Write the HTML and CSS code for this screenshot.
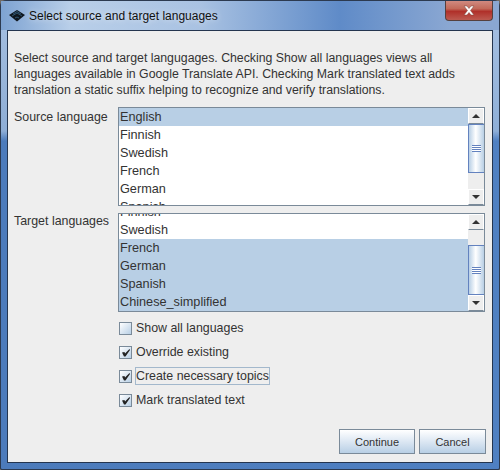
FILE: index.html
```html
<!doctype html>
<html lang="en">

<head>
  <meta charset="UTF-8">
  <title>Select source and target languages</title>
  <link rel="stylesheet" href="styles.css">
</head>

<body>
  <section class="window">
    <header class="titlebar">
      <svg class="appicon" width="18" height="14" viewBox="0 0 18 14">
        <path d="M1 6 L9 1 L17 6 L9 12.500 Z" fill="#0e161e"/>
        <path d="M5 5 L9 2.500 L13 5 M4 7 L9 4 L14 7 M7 9 L9 8 L11 9" fill="none" stroke="#2f5470" stroke-width="1"/>
      </svg>
      <span class="title">Select source and target languages</span>
      <div class="close">
        <svg width="16" height="11" viewBox="0 0 16 11">
          <path d="M3 1 H6 L8 3.500 L10 1 H13 L9.500 5.500 L13 10 H10 L8 7.500 L6 10 H3 L6.500 5.500 Z" fill="#fff" stroke="#7a4038" stroke-width="0.500"/>
        </svg>
      </div>
    </header>

    <main class="content">
      <p class="intro">Select source and target langugages. Checking Show all languages views all<br>languages available in Google Translate API. Checking Mark translated text adds<br>translation a static suffix helping to recognize and verify translations.</p>

      <div class="field source">
        <label class="field-label">Source language</label>
        <div class="listbox">
          <ul class="items">
            <li class="selected">English</li>
            <li>Finnish</li>
            <li>Swedish</li>
            <li>French</li>
            <li>German</li>
            <li>Spanish</li>
          </ul>
          <div class="scrollbar">
            <div class="arrow"><span class="tri up"></span></div>
            <div class="track track-source">
              <div class="thumb"><span class="grip"></span></div>
            </div>
            <div class="arrow"><span class="tri down"></span></div>
          </div>
        </div>
      </div>

      <div class="field target">
        <label class="field-label">Target languages</label>
        <div class="listbox">
          <ul class="items scrolled">
            <li>Finnish</li>
            <li>Swedish</li>
            <li class="selected">French</li>
            <li class="selected">German</li>
            <li class="selected">Spanish</li>
            <li class="selected">Chinese_simplified</li>
          </ul>
          <div class="scrollbar">
            <div class="arrow"><span class="tri up"></span></div>
            <div class="track track-target">
              <div class="thumb"><span class="grip"></span></div>
            </div>
            <div class="arrow"><span class="tri down"></span></div>
          </div>
        </div>
      </div>

      <div class="options">
        <div class="option"><span class="box"></span><span class="opt-text">Show all languages</span></div>
        <div class="option">
          <span class="box"><svg class="check" width="11" height="11" viewBox="0 0 11 11"><path d="M2 5.500 L4.500 5 L5 6.500 L9.500 2 L10 3 L5.500 9.500 L4 9.500 Z" fill="#222"/></svg></span>
          <span class="opt-text">Override existing</span>
        </div>
        <div class="option">
          <span class="box"><svg class="check" width="11" height="11" viewBox="0 0 11 11"><path d="M2 5.500 L4.500 5 L5 6.500 L9.500 2 L10 3 L5.500 9.500 L4 9.500 Z" fill="#222"/></svg></span>
          <span class="opt-text focused">Create necessary topics</span>
        </div>
        <div class="option">
          <span class="box"><svg class="check" width="11" height="11" viewBox="0 0 11 11"><path d="M2 5.500 L4.500 5 L5 6.500 L9.500 2 L10 3 L5.500 9.500 L4 9.500 Z" fill="#222"/></svg></span>
          <span class="opt-text">Mark translated text</span>
        </div>
      </div>

      <div class="buttons">
        <button class="btn continue">Continue</button>
        <button class="btn cancel">Cancel</button>
      </div>
    </main>
  </section>
</body>
</html>
```

FILE: styles.css
```css
html, body {
  margin: 0;
  padding: 0;
}

body {
  width: 500px;
  height: 470px;
  overflow: hidden;
  background: #6f6a66;
  font-family: "Liberation Sans", Arial, sans-serif;
  font-size: 12.300px;
  color: #333333;
}

.window {
  box-sizing: border-box;
  width: 500px;
  height: 470px;
  display: flex;
  flex-direction: column;
  padding: 0 6px 6px 6px;
  border: 1px solid #2c3a50;
  border-radius: 6px 6px 2px 2px;
  background:
    linear-gradient(180deg, rgba(190, 210, 235, 0.8) 0, rgba(170, 195, 225, 0.7) 130px, rgba(170, 195, 225, 0) 140px),
    linear-gradient(90deg, #4c7bbb 0, #4f80c2 100%);
}

.titlebar {
  height: 29px;
  flex: none;
  display: flex;
  align-items: center;
  margin: 0 -6px;
  padding: 0 6px 0 7px;
  background: linear-gradient(90deg, #7ea3d2 0, #b9cfe9 14%, #a9c2e2 40%, #5f8bc8 68%, #8aa7d2 90%);
}

.appicon {
  margin-right: 3px;
}

.title {
  flex: 1;
  font-size: 12px;
  color: #101010;
  text-shadow: 0 0 6px rgba(255, 255, 255, 0.7);
}

.close {
  width: 46px;
  height: 19px;
  margin: -10px 0 0 0;
  display: flex;
  align-items: center;
  justify-content: center;
  border: 1px solid #55403e;
  border-top: 0;
  border-radius: 0 0 4px 4px;
  background: linear-gradient(180deg, #d08a80 0, #c26a5a 40%, #b0302a 55%, #bc5a50 100%);
}

.content {
  flex: 1;
  box-sizing: border-box;
  display: flex;
  flex-direction: column;
  padding: 19px 6px 8px 6px;
  border: 1px solid #24354f;
  background: #eeeeee;
}

.intro {
  margin: 0 0 9px 0;
  line-height: 16px;
}

.field {
  display: flex;
  height: 99px;
}

.target {
  margin-top: 7px;
}

.field-label {
  width: 104px;
  flex: none;
  margin-top: 2px;
  line-height: 16px;
  font-size: 12.400px;
}

.target .field-label {
  margin-top: 0;
}

.listbox {
  width: 367px;
  display: flex;
  box-sizing: border-box;
  border: 1px solid #7a8a99;
  border-right: 0;
  background: #ffffff;
  overflow: hidden;
}

.items {
  flex: 1;
  list-style: none;
  margin: 0;
  padding: 0;
  overflow: hidden;
}

.items li {
  height: 18px;
  line-height: 18px;
  padding-left: 1px;
  font-size: 12.700px;
}

.items .selected {
  background: #b8cfe5;
}

.scrolled li:first-child {
  margin-top: -11px;
}

.scrollbar {
  width: 16px;
  flex: none;
  display: flex;
  flex-direction: column;
  border-right: 1px solid #7a8a99;
  background: #eeeeee;
}

.arrow {
  height: 16px;
  flex: none;
  display: flex;
  align-items: center;
  justify-content: center;
  box-sizing: border-box;
  border: 1px solid #ffffff;
  border-bottom-color: #7a8a99;
  background: #eeeeee;
}

.tri {
  width: 0;
  height: 0;
  border-left: 4px solid transparent;
  border-right: 4px solid transparent;
}

.tri.up {
  border-bottom: 4px solid #333333;
}

.tri.down {
  border-top: 4px solid #333333;
}

.track {
  flex: 1;
  display: flex;
  flex-direction: column;
}

.track-source {
  padding-bottom: 16px;
}

.track-target {
  padding-top: 15px;
}

.thumb {
  flex: 1;
  display: flex;
  align-items: center;
  justify-content: center;
  border: 1px solid #6382bf;
  border-width: 1px 0 1px 1px;
  background: linear-gradient(90deg, #b8cfe5 0, #ffffff 45%, #b8cfe5 100%);
}

.grip {
  width: 9px;
  height: 5px;
  border-top: 1px solid #6382bf;
  border-bottom: 1px solid #6382bf;
  background: linear-gradient(#ffffff 0 1px, #6382bf 1px 2px, #ffffff 2px 3px, #6382bf 3px 4px, #ffffff 4px);
}

.options {
  margin: 7px 0 0 104px;
  display: flex;
  flex-direction: column;
}

.option {
  height: 18px;
  margin-bottom: 6px;
  display: flex;
  align-items: center;
}

.box {
  width: 11px;
  height: 11px;
  margin: 0 3px 0 1px;
  flex: none;
  display: flex;
  border: 1px solid #7a8a99;
  background: linear-gradient(135deg, #ffffff 0, #b8cfe5 100%);
}

.opt-text {
  border: 1px solid transparent;
  padding: 1px 0 1px 0;
  font-size: 12.400px;
}

.opt-text.focused {
  border-color: #a3b8cc;
}

.buttons {
  margin-top: auto;
  display: flex;
  justify-content: flex-end;
  gap: 4px;
}

.btn {
  height: 25px;
  box-sizing: border-box;
  padding: 0;
  border: 1px solid #7a8a99;
  background: linear-gradient(180deg, #ffffff 0, #dce7f3 50%, #b8cfe5 100%);
  font-family: "Liberation Sans", Arial, sans-serif;
  font-size: 11px;
  color: #333333;
}

.continue {
  width: 76px;
}

.cancel {
  width: 67px;
}
```
